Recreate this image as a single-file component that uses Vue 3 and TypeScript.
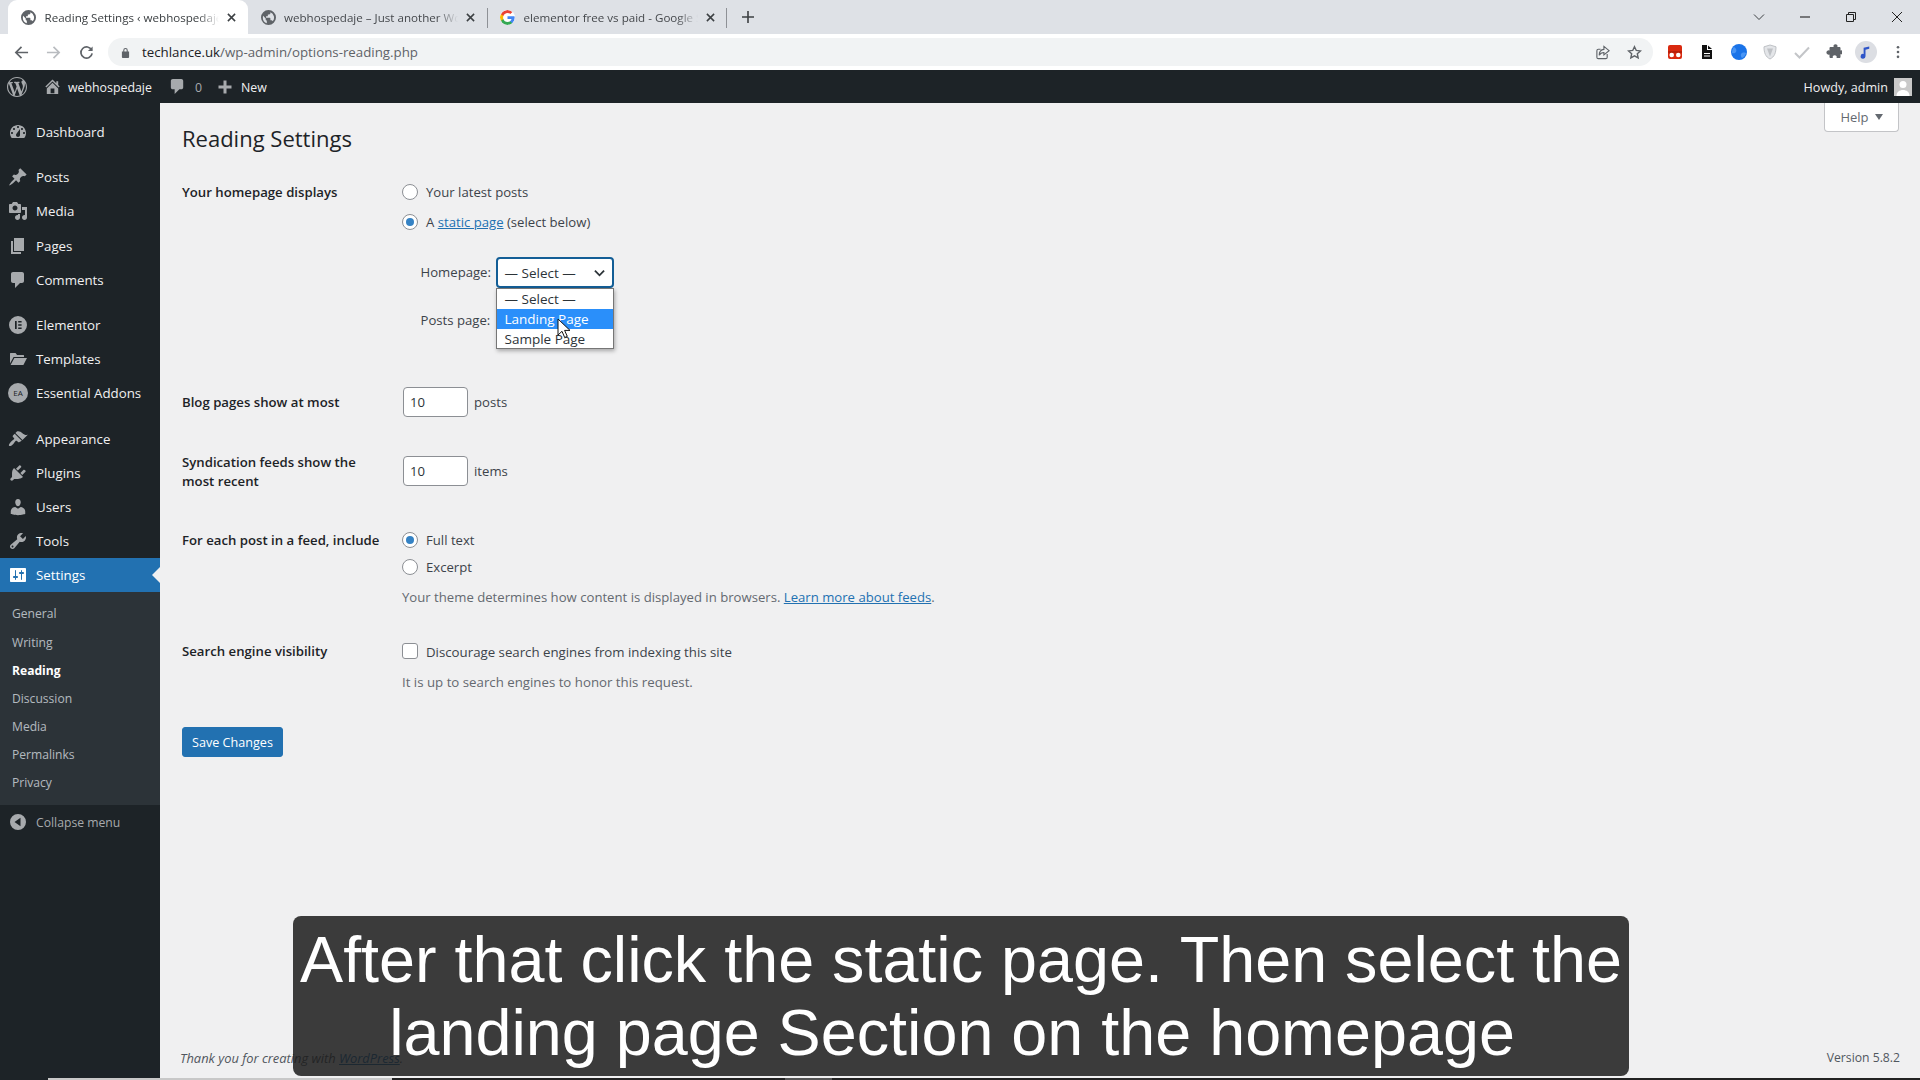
<script setup lang="ts">
interface MenuItem { label: string; d: string; gap?: boolean; badge?: string; current?: boolean }
const menu: MenuItem[] = [
  { label: 'Dashboard', d: 'M3.76 16h12.48c1.1-1.37 1.76-3.11 1.76-5 0-4.42-3.58-8-8-8s-8 3.58-8 8c0 1.89.66 3.63 1.76 5zM10 4c.55 0 1 .45 1 1s-.45 1-1 1-1-.45-1-1 .45-1 1-1zM6 6c.55 0 1 .45 1 1s-.45 1-1 1-1-.45-1-1 .45-1 1-1zm8 0c.55 0 1 .45 1 1s-.45 1-1 1-1-.45-1-1 .45-1 1-1zm-5.37 5.55L12 7v6c0 1.1-.9 2-2 2s-2-.9-2-2c0-.57.24-1.08.63-1.45zM4 10c.55 0 1 .45 1 1s-.45 1-1 1-1-.45-1-1 .45-1 1-1zm12 0c.55 0 1 .45 1 1s-.45 1-1 1-1-.45-1-1 .45-1 1-1z' },
  { label: 'Posts', gap: true, d: 'M10.44 3.02l1.82-1.82 6.36 6.35-1.83 1.82c-1.05-.68-2.48-.57-3.41.36l-.75.75c-.92.93-1.04 2.35-.35 3.41l-1.83 1.82-2.41-2.41-2.8 2.79c-.42.42-3.38 2.71-3.8 2.29s1.86-3.39 2.28-3.81l2.79-2.79L4.1 9.36l1.83-1.82c1.05.69 2.48.57 3.4-.36l.75-.75c.93-.92 1.05-2.35.36-3.41z' },
  { label: 'Media', d: 'M13 11V4c0-.55-.45-1-1-1h-1.67L9 1H5L3.67 3H2c-.55 0-1 .45-1 1v7c0 .55.45 1 1 1h10c.55 0 1-.45 1-1zM7 4.5c1.38 0 2.5 1.12 2.5 2.5S8.38 9.5 7 9.5 4.5 8.38 4.5 7 5.62 4.5 7 4.5zM14 6h5v10.5c0 1.38-1.12 2.5-2.5 2.5S14 17.88 14 16.5s1.12-2.5 2.5-2.5c.17 0 .34.02.5.05V9h-3V6zm-4 8.05V13h2v3.5c0 1.38-1.12 2.5-2.5 2.5S7 17.88 7 16.5 8.12 14 9.5 14c.17 0 .34.02.5.05z' },
  { label: 'Pages', d: 'M6 15V2h10v13H6zm-1 1h8v2H3V5h2v11z' },
  { label: 'Comments', d: 'M5 2h9c1.1 0 2 .9 2 2v7c0 1.1-.9 2-2 2h-2l-5 5v-5H5c-1.1 0-2-.9-2-2V4c0-1.1.9-2 2-2z' },
  { label: 'Elementor', gap: true, d: 'M10 1a9 9 0 1 0 0 18 9 9 0 0 0 0-18zM7 6h1.7v8H7zM10.2 6h3.4v1.6h-3.4zM10.2 9.2h3.4v1.6h-3.4zM10.2 12.4h3.4V14h-3.4z' },
  { label: 'Templates', d: 'M2 4.5c0-.3.2-.5.5-.5h5l1.6 2h6.4c.3 0 .5.2.5.5V8H5.6L2 14.5zM6.4 9H19l-3.6 7H2.6z' },
  { label: 'Essential Addons', badge: 'EA', d: '' },
  { label: 'Appearance', gap: true, d: 'M14.48 11.06L7.41 3.99l1.5-1.5c.5-.56 2.3-.47 3.51.32 1.21.8 1.43 1.28 2.91 2.1 1.18.64 2.45 1.26 4.45.85zm-.71.71L6.7 4.7 4.93 6.47c-.39.39-.39 1.02 0 1.41l1.06 1.06c.39.39.39 1.03 0 1.42-.6.6-1.43 1.11-2.21 1.69-.35.26-.7.53-1.01.84-1.43 1.43-2.4 3.28-1.7 3.98s2.55-.27 3.98-1.7c.31-.31.58-.66.84-1.01.58-.78 1.09-1.61 1.69-2.21.39-.39 1.03-.39 1.42 0l1.06 1.06c.39.39 1.02.39 1.41 0z' },
  { label: 'Plugins', d: 'M13.11 4.36L9.87 7.6 8 5.73l3.24-3.24c.35-.34 1.05-.2 1.56.32.52.51.66 1.21.31 1.55zm-8 1.77l.91-1.12 9.01 9.01-1.19.84c-.71.71-2.63 1.16-3.82 1.16H6.14L4.9 17.26c-.59.59-1.54.59-2.12 0-.59-.58-.59-1.53 0-2.12l1.24-1.24v-3.88c0-1.13.4-3.19 1.09-3.89zm7.26 3.97l3.24-3.24c.34-.35 1.04-.21 1.55.31.52.51.66 1.21.31 1.55l-3.24 3.25z' },
  { label: 'Users', d: 'M10 9.25c-2.27 0-2.73-3.44-2.73-3.44C7 4.02 7.82 2 9.97 2c2.16 0 2.98 2.02 2.71 3.81 0 0-.41 3.44-2.68 3.44zm0 2.57L12.72 10c2.39 0 4.52 2.33 4.52 4.53v2.49s-3.65 1.13-7.24 1.13c-3.65 0-7.24-1.13-7.24-1.13v-2.49c0-2.25 1.94-4.48 4.47-4.48z' },
  { label: 'Tools', d: 'M16.68 9.77c-1.34 1.34-3.3 1.67-4.95.99l-5.41 6.52c-.99.99-2.59.99-3.58 0s-.99-2.59 0-3.57l6.52-5.42c-.68-1.65-.35-3.61.99-4.95 1.28-1.28 3.12-1.62 4.72-1.06l-2.89 2.89 2.82 2.82 2.86-2.87c.53 1.58.18 3.39-1.08 4.67zM3.81 16.21c.4.39 1.04.39 1.43 0 .4-.4.4-1.04 0-1.43-.39-.4-1.03-.4-1.43 0-.39.39-.39 1.03 0 1.43z' },
  { label: 'Settings', current: true, d: 'M18 16V4c0-.55-.45-1-1-1H3c-.55 0-1 .45-1 1v12c0 .55.45 1 1 1h14c.55 0 1-.45 1-1zM8 11h1c.55 0 1 .45 1 1s-.45 1-1 1H8v1.5c0 .28-.22.5-.5.5s-.5-.22-.5-.5V13H6c-.55 0-1-.45-1-1s.45-1 1-1h1V5.5c0-.28.22-.5.5-.5s.5.22.5.5V11zm5-2h-1c-.55 0-1-.45-1-1s.45-1 1-1h1V5.5c0-.28.22-.5.5-.5s.5.22.5.5V7h1c.55 0 1 .45 1 1s-.45 1-1 1h-1v5.5c0 .28-.22.5-.5.5s-.5-.22-.5-.5V9z' },
]
const submenu = ['General', 'Writing', 'Reading', 'Discussion', 'Media', 'Permalinks', 'Privacy']
const wpLogo = 'M20 10c0-5.51-4.49-10-10-10C4.48 0 0 4.49 0 10c0 5.52 4.48 10 10 10 5.51 0 10-4.48 10-10zM7.78 15.37L4.37 6.22c.55-.02 1.17-.08 1.17-.08.5-.06.44-1.13-.06-1.11 0 0-1.45.11-2.37.11-.18 0-.37 0-.58-.01C4.12 2.69 6.87 1.11 10 1.11c2.33 0 4.45.87 6.05 2.34-.68-.11-1.65.39-1.65 1.58 0 .74.45 1.36.9 2.1.35.61.55 1.36.55 2.46 0 1.49-1.4 5-1.4 5l-3.03-8.35c.54-.02.82-.17.82-.17.5-.05.44-1.25-.06-1.22 0 0-1.44.12-2.38.12-.87 0-2.33-.12-2.33-.12-.5-.03-.56 1.2-.06 1.22l.92.08 1.26 3.41zM17.41 10c.24-.64.74-1.87.43-4.25.7 1.29 1.05 2.71 1.05 4.25 0 3.29-1.73 6.24-4.4 7.78.97-2.59 1.94-5.2 2.92-7.78zM6.1 18.09C3.12 16.65 1.11 13.53 1.11 10c0-1.3.23-2.48.72-3.59C3.25 10.3 4.67 14.2 6.1 18.09zm4.03-6.63l2.58 6.98c-.86.29-1.76.45-2.71.45-.79 0-1.57-.11-2.29-.33.81-2.38 1.62-4.74 2.42-7.1z'
const homeIcon = 'M16 8.5l1.53 1.53-1.06 1.06L10 4.62l-6.47 6.47-1.06-1.06L10 2.5l4 4v-2h2v4zm-6-2.46l6 5.99V18H4v-5.97zM12 17v-5H8v5h4z'
const commentIcon = 'M5 2h9c1.1 0 2 .9 2 2v7c0 1.1-.9 2-2 2h-2l-5 5v-5H5c-1.1 0-2-.9-2-2V4c0-1.1.9-2 2-2z'
const globe = 'M8 0a8 8 0 1 0 0 16A8 8 0 0 0 8 0zM2 8c0-.6.1-1.2.3-1.8L5 9v1c0 .7.6 1 1.2 1.2V14A6 6 0 0 1 2 8zm10.4 4c-.2-.5-.7-1-1.2-1H10V9c0-.3-.3-.7-.7-.7H5.4V6.7h1.2c.4 0 .7-.3.7-.7V4.7h1.4c.7 0 1.3-.6 1.3-1.3v-1a6 6 0 0 1 2.4 9.6z'
const tabs = [
  { title: 'Reading Settings ‹ webhospedaje', active: true, google: false },
  { title: 'webhospedaje – Just another WordPress', active: false, google: false },
  { title: 'elementor free vs paid - Google Search', active: false, google: true },
]
</script>

<template>
  <div class="screen">
    <header class="tabstrip">
      <div v-for="t in tabs" :key="t.title" class="tab" :class="{ active: t.active }">
        <svg v-if="!t.google" class="fav" viewBox="0 0 16 16"><path fill="#5f6368" fill-rule="evenodd" :d="globe" /></svg>
        <svg v-else class="fav gfav" viewBox="0 0 18 18">
          <path fill="#4285f4" d="M17.6 9.2c0-.6-.1-1.2-.2-1.7H9v3.3h4.8a4.1 4.1 0 0 1-1.8 2.7v2.2h2.9c1.7-1.6 2.7-3.9 2.7-6.5z" />
          <path fill="#34a853" d="M9 18c2.4 0 4.5-.8 6-2.2l-3-2.2c-.8.5-1.8.9-3 .9-2.3 0-4.3-1.6-5-3.7H1v2.3A9 9 0 0 0 9 18z" />
          <path fill="#fbbc05" d="M4 10.8a5.4 5.4 0 0 1 0-3.5V4.9H1a9 9 0 0 0 0 8.2z" />
          <path fill="#ea4335" d="M9 3.6c1.3 0 2.5.5 3.4 1.3L15 2.400A9 9 0 0 0 1 4.900l3 2.400c.700-2.100 2.700-3.700 5-3.700z" />
        </svg>
        <span class="tab-title">{{ t.title }}</span>
        <svg class="tab-x" viewBox="0 0 10 10"><path d="M1 1l8 8M9 1l-8 8" stroke="#3c4043" stroke-width="1.700" /></svg>
      </div>
      <svg class="newtab" viewBox="0 0 12 12"><path d="M6 0v12M0 6h12" stroke="#3c4043" stroke-width="1.600" /></svg>
      <div class="winctl">
        <svg class="wc" viewBox="0 0 12 12"><path d="M1 3.500l5 5 5-5" fill="none" stroke="#3c4043" /></svg>
        <svg class="wc" viewBox="0 0 12 12"><path d="M1 6h10" stroke="#222" stroke-width="1.100" /></svg>
        <svg class="wc" viewBox="0 0 12 12"><path d="M1.500 3.500h7v7h-7zM3.500 3.500v-2h7v7h-2" fill="none" stroke="#222" /></svg>
        <svg class="wc" viewBox="0 0 12 12"><path d="M1 1l10 10M11 1L1 11" stroke="#222" /></svg>
      </div>
    </header>

    <nav class="toolbar">
      <svg class="tb back" viewBox="0 0 16 16"><path d="M15 8H2M8 2L2 8l6 6" fill="none" stroke="#5f6368" stroke-width="1.800" /></svg>
      <svg class="tb fwd" viewBox="0 0 16 16"><path d="M1 8h13M8 2l6 6-6 6" fill="none" stroke="#b9bcc0" stroke-width="1.800" /></svg>
      <svg class="tb reload" viewBox="0 0 16 16"><path d="M13.500 5.500A6 6 0 1 0 14 9" fill="none" stroke="#5f6368" stroke-width="1.800" /><path d="M14.500 1.500v5h-5z" fill="#5f6368" /></svg>
      <div class="omnibox">
        <svg class="lock" viewBox="0 0 10 12"><path fill="#5f6368" d="M2.500 5V3.500a2.500 2.500 0 0 1 5 0V5H9a1 1 0 0 1 0 .5V11a1 1 0 0 1-1 1H2a1 1 0 0 1-1-1V5.500A1 1 0 0 1 1 5zm1.200 0h2.600V3.500a1.300 1.300 0 0 0-2.600 0z" /></svg>
        <span class="url"><b>techlance.uk</b>/wp-admin/options-reading.php</span>
        <svg class="omni-ic" viewBox="0 0 16 16"><path d="M13 9.500V13a1.500 1.500 0 0 1-1.500 1.500h-8A1.500 1.500 0 0 1 2 13V6a1.500 1.500 0 0 1 1.500-1.500H6" fill="none" stroke="#5f6368" stroke-width="1.200" /><path d="M9.500 1.500L15 6l-5.500 4.500V8C7 8 5.500 9 4.500 11c0-3.500 2-6 5-6.300z" fill="none" stroke="#5f6368" stroke-width="1.200" /></svg>
        <svg class="omni-ic star" viewBox="0 0 16 16"><path d="M8 1.800l1.900 4 4.400.5-3.300 3 .9 4.400L8 11.500l-3.900 2.200.9-4.400-3.300-3 4.400-.5z" fill="none" stroke="#5f6368" stroke-width="1.500" /></svg>
      </div>
      <div class="extensions">
        <svg class="ext" viewBox="0 0 16 16"><rect x="1" y="1" width="14" height="14" rx="2" fill="#d9290f" /><rect x="1" y="7" width="14" height="2" fill="#b8200a" /><circle cx="4.700" cy="11" r="2.300" fill="#fff" /><circle cx="11.300" cy="11" r="2.300" fill="#fff" /></svg>
        <svg class="ext" viewBox="0 0 16 16"><path d="M3 1h5v5h5v9H3z" fill="#111" /><path d="M9 1.500l4 3.500H9z" fill="#111" /><path d="M5 9h6v1H5zM5 11.500h6v1H5z" fill="#fff" /></svg>
        <svg class="ext" viewBox="0 0 16 16"><circle cx="8" cy="8" r="8" fill="#1a73e8" /><path d="M3 3c2 1 3 3 2 5S1 9 1 9 1 5 3 3zM11 9c2-1 4 0 4 0s-1 4-4 5c-1-1-2-4 0-5z" fill="#4a96f5" /></svg>
        <svg class="ext" viewBox="0 0 16 16"><path d="M8 1l6 1.800c0 6-1.500 10-6 12.200C3.500 12.800 2 8.800 2 2.800z" fill="#e3e5e8" stroke="#bfc2c6" /><path d="M5 4.500l3 8 3-8z" fill="#bfc2c6" /></svg>
        <svg class="ext" viewBox="0 0 16 16"><path d="M1 9l4.500 4.500L15 3.500" fill="none" stroke="#c3c5c8" stroke-width="2" /></svg>
        <svg class="ext" viewBox="0 0 16 16"><path fill="#5f6368" d="M5.500 3h2.200a2 2 0 1 1 3.600 0h2.200c.5 0 1 .5 1 1v2.500a2 2 0 1 1 0 3.600V13c0 .5-.5 1-1 1h-3a2 2 0 1 0-3.600 0h-2.400c-.5 0-1-.5-1-1v-2.500a2.200 2.200 0 1 1 0-4V4c0-.5.500-1 1-1z" /></svg>
        <span class="avatar"><svg viewBox="0 0 16 16"><path d="M6 3l6-1.500v2.500L8 5v7a2.600 2.600 0 1 1-2-2.500z" fill="#2f55c8" /></svg></span>
        <svg class="ext kebab" viewBox="0 0 4 16"><circle cx="2" cy="2.500" r="1.500" fill="#5f6368" /><circle cx="2" cy="8" r="1.500" fill="#5f6368" /><circle cx="2" cy="13.500" r="1.500" fill="#5f6368" /></svg>
      </div>
    </nav>

    <div class="adminbar">
      <svg class="ab-logo" viewBox="0 0 20 20"><path fill="#a7aaad" fill-rule="evenodd" :d="wpLogo" /></svg>
      <svg class="ab-home" viewBox="0 0 20 20"><path fill="#a7aaad" fill-rule="evenodd" :d="homeIcon" /></svg>
      <span class="ab-site">webhospedaje</span>
      <svg class="ab-comment" viewBox="0 0 20 20"><path fill="#a7aaad" :d="commentIcon" /></svg>
      <span class="ab-count">0</span>
      <svg class="ab-plus" viewBox="0 0 14 14"><path d="M7 .5v13M.5 7h13" stroke="#a7aaad" stroke-width="3" /></svg>
      <span class="ab-new">New</span>
      <span class="ab-howdy">Howdy, admin</span>
      <span class="ab-avatar"><svg viewBox="0 0 18 18"><rect width="18" height="18" fill="#c9c9c9" /><circle cx="9" cy="6.500" r="3.500" fill="#fff" /><path d="M2.500 18c0-4 3-6 6.500-6s6.500 2 6.500 6z" fill="#fff" /></svg></span>
    </div>

    <div class="body">
      <aside class="sidebar">
        <template v-for="m in menu" :key="m.label">
          <div class="mi" :class="{ gap: m.gap, current: m.current }">
            <span v-if="m.badge" class="ea">{{ m.badge }}</span>
            <svg v-else class="mi-icon" viewBox="0 0 20 20"><path fill="currentColor" fill-rule="evenodd" :d="m.d" /></svg>
            <span>{{ m.label }}</span>
          </div>
        </template>
        <ul class="sub">
          <li v-for="s in submenu" :key="s" :class="{ on: s === 'Reading' }">{{ s }}</li>
        </ul>
        <div class="collapse">
          <svg class="mi-icon" viewBox="0 0 20 20"><path fill="currentColor" fill-rule="evenodd" d="M10 2a8 8 0 1 0 0 16 8 8 0 0 0 0-16zm2.500 3.800v8.400L6.500 10z" /></svg>
          <span>Collapse menu</span>
        </div>
      </aside>

      <main class="content">
        <div class="help">Help <i class="caret"></i></div>
        <h1>Reading Settings</h1>

        <section class="row row-home">
          <div class="th">Your homepage displays</div>
          <div class="td">
            <label class="opt"><i class="radio"></i>Your latest posts</label>
            <label class="opt mt6"><i class="radio on"></i><span>A <a>static page</a> (select below)</span></label>
            <div class="pick first">
              <span class="pick-label">Homepage:</span>
              <div class="select focus">
                <span>— Select —</span>
                <svg class="chev" viewBox="0 0 12 8"><path d="M1 1.500l5 5 5-5" fill="none" stroke="#2c3338" stroke-width="2" /></svg>
                <ul class="droplist">
                  <li>— Select —</li>
                  <li class="hl">Landing Page</li>
                  <li>Sample Page</li>
                </ul>
                <svg class="cursor" viewBox="0 0 14 21"><path d="M1 1v16l4-3.700 2.700 6.200 2.600-1.100-2.700-6H13z" fill="#fff" stroke="#111" /></svg>
              </div>
            </div>
            <div class="pick second">
              <span class="pick-label">Posts page:</span>
              <div class="select"></div>
            </div>
          </div>
        </section>

        <section class="row row-blog">
          <div class="th">Blog pages show at most</div>
          <div class="td inline"><input class="num" value="10" readonly /><span>posts</span></div>
        </section>

        <section class="row row-synd">
          <div class="th two">Syndication feeds show the most recent</div>
          <div class="td inline"><input class="num" value="10" readonly /><span>items</span></div>
        </section>

        <section class="row row-feed">
          <div class="th">For each post in a feed, include</div>
          <div class="td">
            <label class="opt"><i class="radio on"></i>Full text</label>
            <label class="opt mt3"><i class="radio"></i>Excerpt</label>
            <p class="desc d1">Your theme determines how content is displayed in browsers. <a>Learn more about feeds</a>.</p>
          </div>
        </section>

        <section class="row row-search">
          <div class="th">Search engine visibility</div>
          <div class="td">
            <label class="opt"><i class="check"></i><span class="discourage">Discourage search engines from indexing this site</span></label>
            <p class="desc d2">It is up to search engines to honor this request.</p>
          </div>
        </section>

        <button class="save">Save Changes</button>

        <footer class="foot">
          <em>Thank you for creating with <a>WordPress</a>.</em>
          <span class="ver">Version 5.8.2</span>
        </footer>
      </main>
    </div>
    <div class="strip"><i class="s1"></i><i class="s2"></i><i class="s3"></i><i class="s4"></i></div>

    <div class="caption">After that click the static page. Then select the<br /><span class="line2">landing page Section on the homepage</span></div>
  </div>
</template>

<style>
html, body { margin: 0; background: #f0f0f1; }
</style>

<style scoped>
* { box-sizing: border-box; }
.screen { position: relative; width: 1920px; height: 1080px; overflow: hidden; display: flex; flex-direction: column; font-family: "Open Sans", "Noto Sans", sans-serif; font-size: 13px; color: #3c434a; }

.tabstrip { height: 34px; flex: none; background: #dee1e6; display: flex; align-items: stretch; padding-left: 8px; position: relative; }
.tab { width: 239.500px; display: flex; align-items: center; padding: 0 12px; position: relative; }
.tab.active { background: #fff; border-radius: 9px 9px 0 0; }
.tab:nth-child(3)::before, .tab:nth-child(3)::after { content: ""; position: absolute; top: 8px; height: 20px; width: 1px; background: #8e9196; }
.tab:nth-child(3)::before { left: 0; }
.tab:nth-child(3)::after { right: 0; }
.fav { width: 15px; height: 15px; flex: none; margin-left: 1px; }
.gfav { background: #fff; border-radius: 50%; }
.tab-title { margin-left: 8.500px; flex: 1; white-space: nowrap; overflow: hidden; font-size: 11.600px; color: #45484c; -webkit-mask-image: linear-gradient(90deg, #000 88%, transparent 100%); mask-image: linear-gradient(90deg, #000 88%, transparent 100%); }
.tab.active .tab-title { color: #3c4043; }
.tab-x { width: 9px; height: 9px; margin-left: 8px; flex: none; }
.newtab { width: 12px; height: 12px; align-self: center; margin-left: 15px; }
.winctl { margin-left: auto; display: flex; align-items: center; gap: 34px; padding-right: 17px; }
.wc { width: 12px; height: 12px; }

.toolbar { height: 36px; flex: none; background: #fff; display: flex; align-items: center; padding-left: 14px; }
.tb { width: 15px; height: 15px; flex: none; }
.fwd { margin-left: 17px; }
.reload { margin-left: 18px; }
.omnibox { margin-left: 14px; width: 1545px; height: 28px; background: #f1f3f4; border-radius: 14px; display: flex; align-items: center; padding-left: 13px; }
.lock { width: 9px; height: 11px; flex: none; }
.url { margin-left: 12px; font-size: 13.300px; color: #5f6368; flex: 1; }
.url b { font-weight: 400; color: #202124; }
.omni-ic { width: 15px; height: 15px; flex: none; margin-right: 11px; }
.star { margin-left: 6px; }
.extensions { display: flex; align-items: center; margin-left: 14px; }
.ext { width: 16px; height: 16px; margin-right: 15.800px; flex: none; }
.avatar { width: 22px; height: 22px; border-radius: 50%; background: #dcdee3; display: flex; align-items: center; justify-content: center; margin: 0 19px 0 -3px; flex: none; }
.avatar svg { width: 15px; height: 15px; }
.ext.kebab { width: 4px; height: 14px; margin: 0; }

.adminbar { height: 33px; flex: none; background: #1d2327; display: flex; align-items: center; color: #f0f0f1; font-size: 12.350px; padding-left: 7px; padding-right: 8px; }
.adminbar > span:not(.ab-avatar) { padding-top: 2px; }
.ab-logo { width: 20px; height: 20px; }
.ab-home { width: 19px; height: 19px; margin-left: 16px; }
.ab-site { margin-left: 6px; }
.ab-comment { width: 19px; height: 19px; margin-left: 16px; }
.ab-count { margin-left: 8px; color: #a7aaad; }
.ab-plus { width: 14px; height: 14px; margin-left: 16px; }
.ab-new { margin-left: 9px; }
.ab-howdy { margin-left: auto; font-size: 12.600px; }
.ab-avatar { width: 18px; height: 18px; margin-left: 6px; }
.ab-avatar svg { display: block; }

.body { flex: 1; min-height: 0; display: flex; }
.sidebar { width: 160px; flex: none; background: #1d2327; padding-top: 12px; color: #f0f0f1; }
.mi { height: 34.200px; display: flex; align-items: center; padding-left: 8px; font-size: 13.300px; position: relative; }
.mi.gap { margin-top: 11px; }
.mi-icon { width: 20px; height: 20px; color: #a7aaad; margin-right: 8px; flex: none; }
.ea { width: 20px; height: 20px; margin-right: 8px; border-radius: 50%; background: #a7aaad; color: #1d2327; font-size: 8px; line-height: 20px; text-align: center; flex: none; }
.mi.current { background: #2271b1; color: #fff; }
.mi.current .mi-icon { color: #fff; }
.mi.current::after { content: ""; position: absolute; right: 0; top: 9px; border: 8px solid transparent; border-right-color: #f0f0f1; border-left: 0; }
.sub { list-style: none; margin: 0; padding: 8px 0 8.400px; background: #2c3338; }
.sub li { height: 28.100px; line-height: 28px; padding-left: 12px; font-size: 12.100px; color: rgba(240, 246, 252, .7); }
.sub li.on { color: #fff; font-weight: 700; }
.collapse { height: 34px; display: flex; align-items: center; padding-left: 8px; font-size: 12.200px; color: #a7aaad; }

.content { flex: 1; position: relative; padding-left: 22px; padding-right: 20px; display: flex; flex-direction: column; background: #f0f0f1; }
.help { position: absolute; top: 0; right: 21px; width: 75px; height: 29px; background: #fff; border: 1px solid #c3c4c7; border-top: 0; border-radius: 0 0 4px 4px; color: #646970; font-size: 13px; display: flex; align-items: center; justify-content: center; gap: 6px; }
.caret { border: 4.500px solid transparent; border-top: 6px solid #646970; border-bottom: 0; }
h1 { margin: 19.500px 0 0; height: 30.500px; line-height: 30px; font-size: 22px; font-weight: 400; color: #1d2327; }
.row { display: flex; }
.th { width: 220px; flex: none; font-weight: 600; color: #1d2327; line-height: 24px; font-size: 13.200px; }
.th.two { line-height: 19px; padding: 1px 30px 0 0; }
.td { flex: 1; font-size: 13.150px; }
.td.inline { display: flex; align-items: center; gap: 6px; }
.row-home { margin-top: 27px; }
.row-blog { margin-top: 51px; }
.row-blog .th { line-height: 30px; }
.row-synd { margin-top: 35px; align-items: center; }
.row-synd .td { padding-bottom: 2px; }
.row-feed { margin-top: 37px; }
.row-search { margin-top: 32px; }
.opt { display: flex; align-items: center; height: 24px; line-height: 24px; }
.discourage { font-size: 13.250px; padding-top: 2px; }
.mt6 { margin-top: 6px; }
.mt3 { margin-top: 3px; }
.radio, .check { width: 16px; height: 16px; margin-right: 8px; background: #fff; border: 1px solid #8c8f94; flex: none; position: relative; }
.radio { border-radius: 50%; }
.check { border-radius: 3px; }
.radio.on::after { content: ""; position: absolute; left: 3px; top: 3px; width: 8px; height: 8px; border-radius: 50%; background: #3582c4; }
a { color: #2271b1; text-decoration: underline; }
.pick { display: flex; align-items: center; height: 31px; padding-left: 18.500px; position: relative; }
.pick.first { margin-top: 23px; }
.pick.second { margin-top: 17px; }
.pick-label { width: 75px; flex: none; padding-bottom: 2px; }
.select { width: 118px; height: 31px; background: #fff; border: 1px solid #8c8f94; border-radius: 4px; padding-left: 8px; display: flex; align-items: center; position: relative; color: #2c3338; font-size: 13.500px; }
.select.focus { border: 2px solid #135e96; padding-left: 7px; z-index: 2; }
.chev { width: 11px; height: 8px; position: absolute; right: 7px; top: 10px; }
.droplist { position: absolute; left: -2px; top: 29px; width: 118px; height: 61px; margin: 0; padding: 0; list-style: none; background: #fff; border: 1px solid #767676; box-shadow: 1px 2px 4px rgba(0, 0, 0, .3); }
.droplist li { height: 20px; line-height: 20px; padding-left: 8px; color: #2c3338; }
.droplist li.hl { background: #2a8ffa; color: #fff; }
.cursor { position: absolute; left: 59px; top: 59px; width: 14px; height: 21px; }
.num { width: 65px; height: 30px; margin-left: 1px; padding: 0 6px; border: 1px solid #8c8f94; border-radius: 4px; background: #fff; font: inherit; color: #2c3338; outline: none; }
.desc { margin: 0; height: 20px; line-height: 20px; color: #646970; }
.d1 { margin-top: 8px; }
.d2 { margin-top: 9px; font-size: 13.250px; }
.save { margin-top: 35px; width: 101px; height: 30px; background: #2271b1; border: 1px solid #2271b1; border-radius: 3px; color: #fff; font: inherit; font-size: 12.600px; padding: 0; }
.foot { margin-top: auto; height: 20px; margin-bottom: 10px; display: flex; justify-content: space-between; line-height: 20px; color: #50575e; margin-left: -2px; }
.foot em { font-size: 12.900px; }
.ver { font-size: 12.200px; }

.strip { height: 2px; flex: none; display: flex; background: #222; }
.strip i { display: block; height: 2px; }
.s1 { width: 48px; background: #1d2327; }
.s2 { width: 344px; background: #c8c8c8; }
.s3 { width: 393px; }
.s4 { width: 47px; background: #555; }

.caption { position: absolute; left: 293px; top: 916px; width: 1336px; height: 160px; border-radius: 8px; background: rgba(27, 27, 27, .85); color: #fff; font-family: "Liberation Sans", Arial, sans-serif; font-size: 64.700px; line-height: 73px; text-align: center; padding-top: 7px; white-space: nowrap; }
.line2 { padding-right: 18px; }
</style>
